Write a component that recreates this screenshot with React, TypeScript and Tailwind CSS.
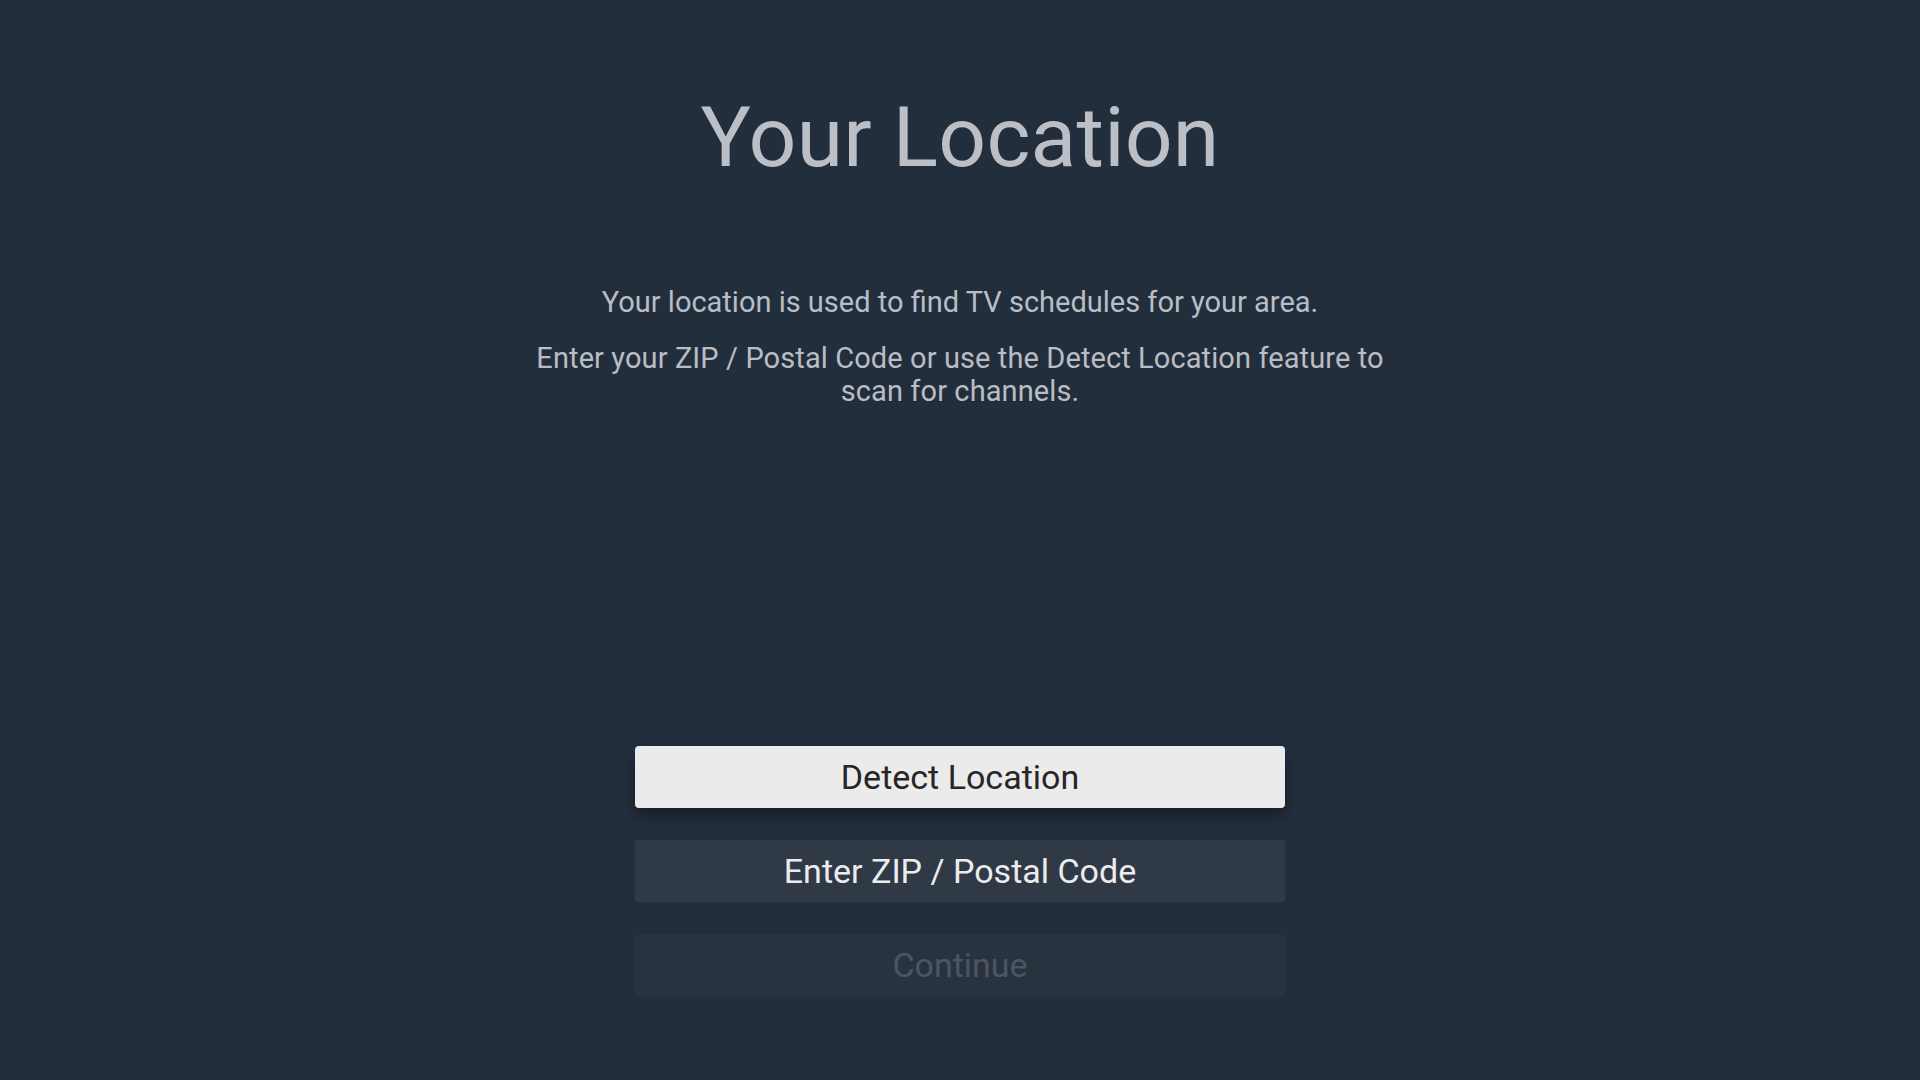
import React from "react";

export default function App() {
  return (
    <div
      className="w-full min-h-[1080px] bg-[#232e3d] flex flex-col items-center"
      style={{ fontFamily: "Roboto, 'Liberation Sans', sans-serif" }}
    >
      <h1 className="mt-[96px] text-[84px] leading-none text-[#bcc0c6] font-normal tracking-[0.2px]">
        Your Location
      </h1>
      <div className="mt-[106px] flex flex-col items-center text-center text-[29px] leading-[33px] text-[#b9bdc4] gap-[23px] w-[900px]">
        <p>Your location is used to find TV schedules for your area.</p>
        <p className="tracking-[0.1px]">
          Enter your ZIP / Postal Code or use the Detect Location feature to
          <br />
          scan for channels.
        </p>
      </div>
      <div className="mt-[338px] flex flex-col gap-[32px] w-[650px]">
        <button className="h-[62px] w-full rounded-[4px] bg-[#ebebeb] text-[#262626] text-[34px] leading-none shadow-[0_8px_14px_rgba(0,0,0,0.35)]">
          Detect Location
        </button>
        <button className="h-[62px] w-full rounded-[4px] bg-[#303a47] text-[#ececec] text-[34px] leading-none">
          Enter ZIP / Postal Code
        </button>
        <button className="h-[62px] w-full rounded-[4px] bg-[#29333f] text-[#4b5563] text-[34px] leading-none">
          Continue
        </button>
      </div>
    </div>
  );
}
